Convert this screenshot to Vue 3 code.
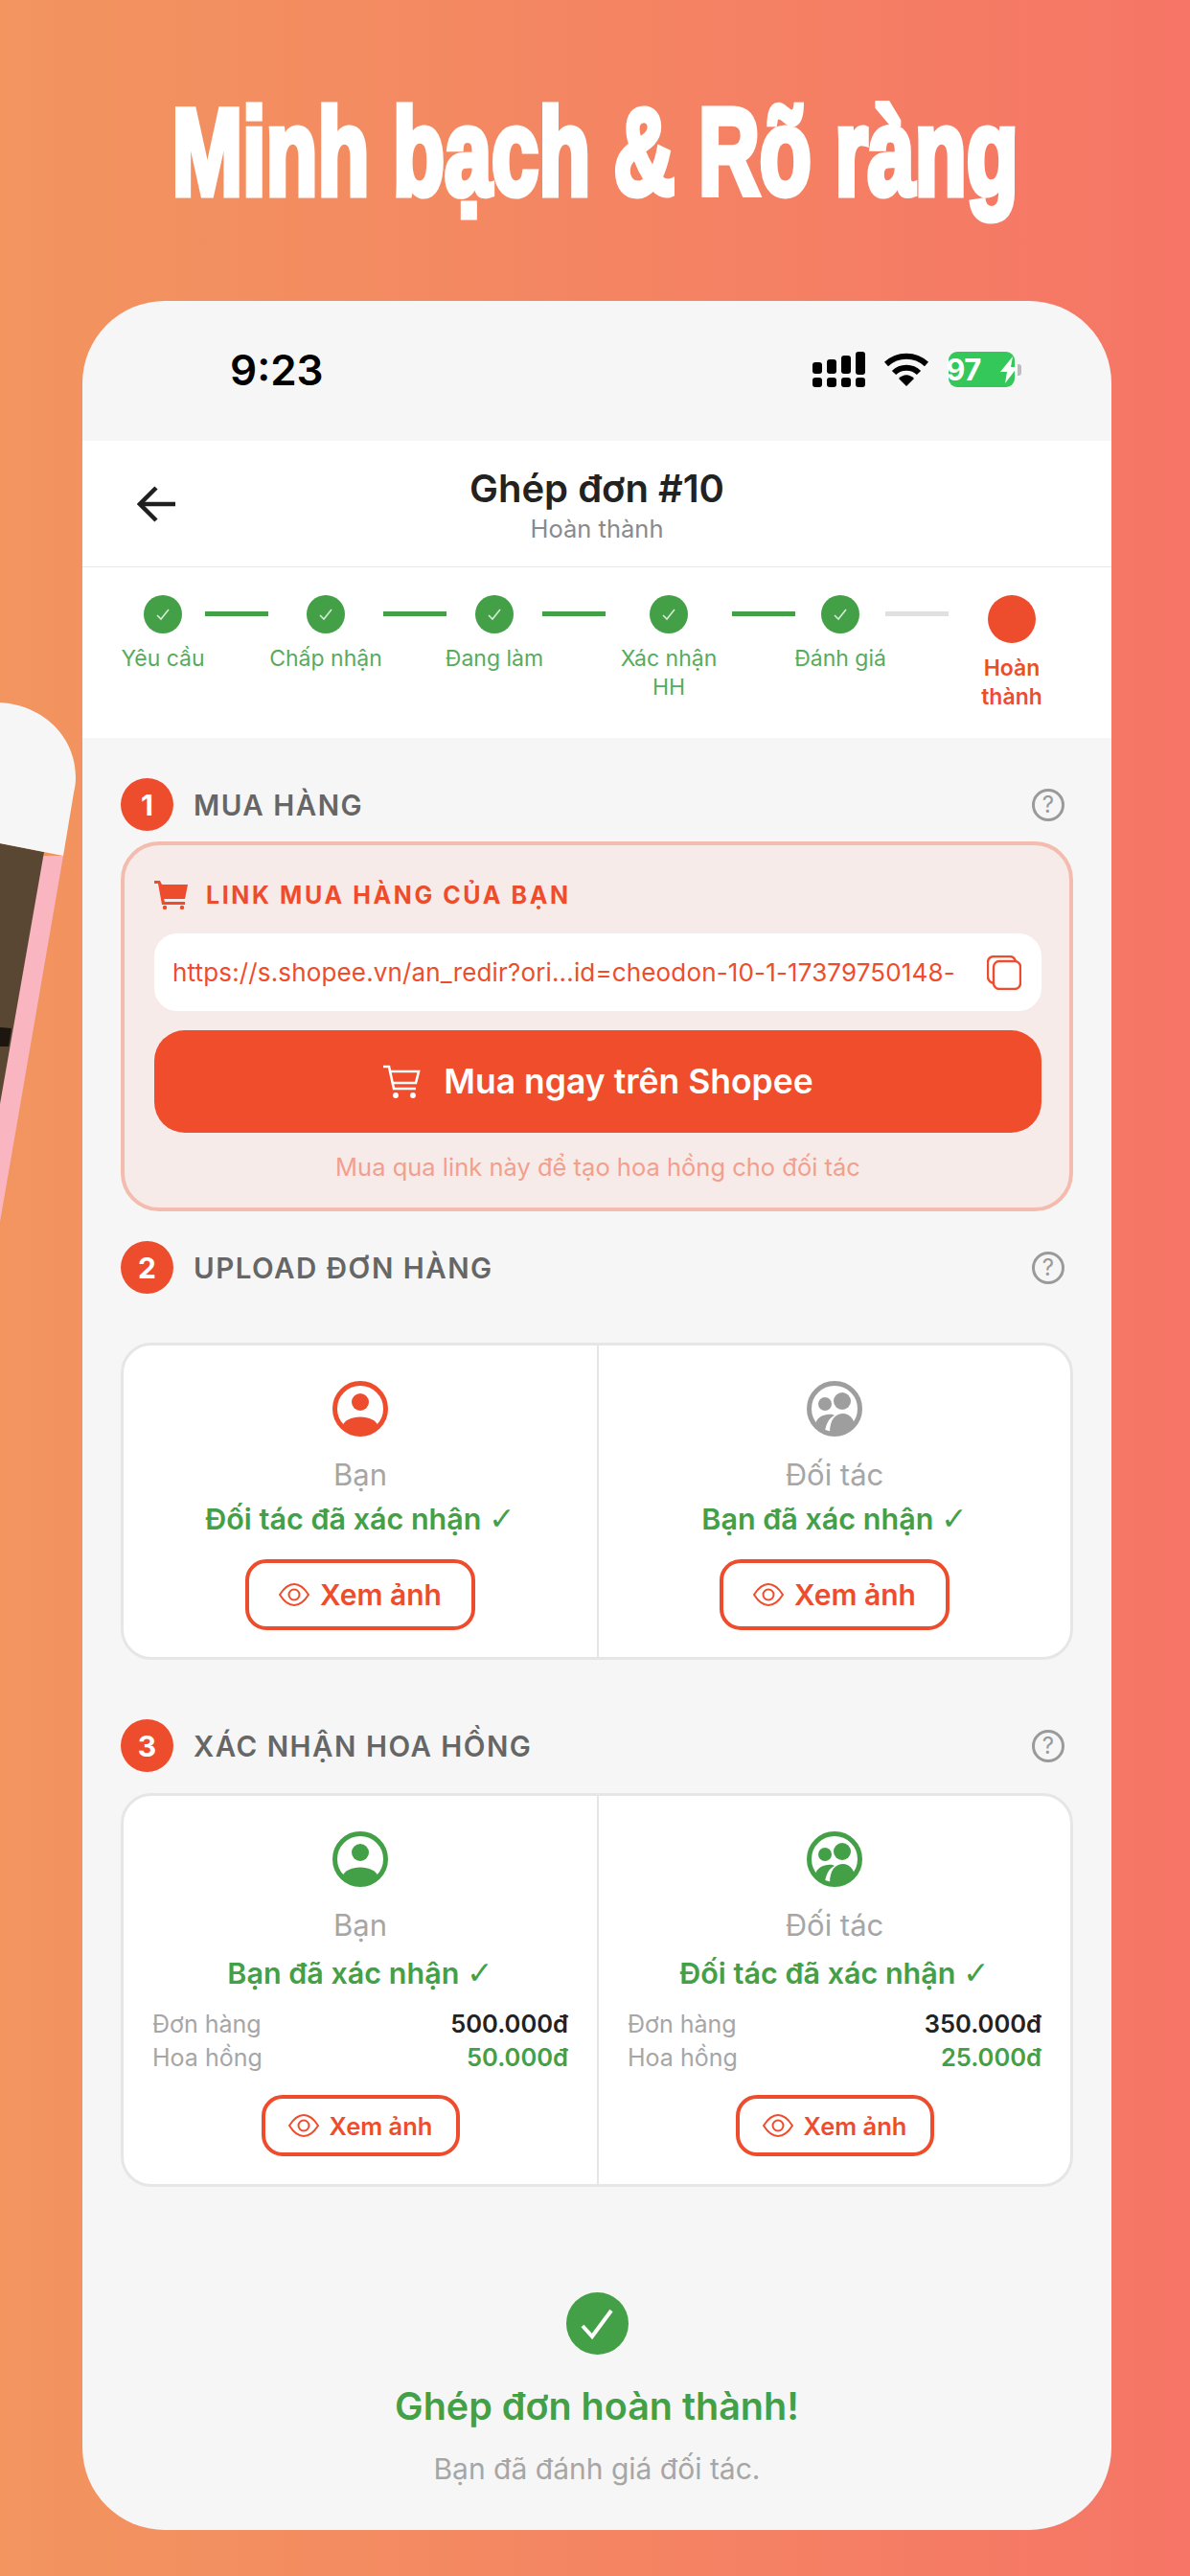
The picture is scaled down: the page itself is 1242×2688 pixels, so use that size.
<template>
  <div class="page">
    <svg class="side-phone" width="86" height="600" viewBox="0 0 86 600">
      <path d="M0 193 L66 193 L0 575 Z" fill="#f9b6c1" />
      <path d="M0 180 L46 189 L0 452 Z" fill="#5a4733" />
      <path d="M0 372 L12 373 L9 392 L0 392 Z" fill="#1c1510" />
      <path d="M0 33 C45 36 79 68 79 112 C79 118 78 122 77 127 L66 193 L0 180 Z" fill="#f6f6f6" />
    </svg>

    <h1 class="headline">Minh bạch &amp; Rõ ràng</h1>

    <div class="phone">
      <div class="status-bar">
        <span class="clock">9:23</span>
        <div class="status-icons">
          <svg width="56" height="37" viewBox="0 0 56 37" fill="#000">
            <rect x="0" y="27" width="10" height="10" rx="3" />
            <rect x="15" y="27" width="10" height="10" rx="3" />
            <rect x="30" y="27" width="10" height="10" rx="3" />
            <rect x="45" y="27" width="10" height="10" rx="3" />
            <rect x="0" y="11" width="10" height="12" rx="3" />
            <rect x="15" y="8" width="10" height="15" rx="3" />
            <rect x="30" y="4" width="10" height="19" rx="3" />
            <rect x="45" y="0" width="10" height="24" rx="3" />
          </svg>
          <svg width="48" height="36" viewBox="0 0 48 36" fill="none" stroke="#000" stroke-width="6">
            <path d="M3 12 C15 1 33 1 45 12" />
            <path d="M11 21 C18 14 30 14 37 21" />
            <path d="M16 27 L24 35 L32 27 C27 22 21 22 16 27 Z" fill="#000" stroke="none" />
          </svg>
          <div class="battery">
            <span>97</span>
            <svg class="bolt" width="18" height="28" viewBox="0 0 18 28" fill="#fff"><path d="M13 0 L0 16 H7 L5 28 L18 11 H11 Z" /></svg>
          </div>
          <i class="battery-nub"></i>
        </div>
      </div>

      <header class="top-bar">
        <svg class="back" width="42" height="38" viewBox="0 0 42 38" fill="none" stroke="#1f1f1f" stroke-width="4.5">
          <path d="M40 19 H4" />
          <path d="M20 2 L3 19 L20 36" />
        </svg>
        <div class="top-title">Ghép đơn #10</div>
        <div class="top-sub">Hoàn thành</div>
      </header>

      <div class="stepper">
        <template v-for="(s, i) in steps" :key="s.label">
          <div class="step" :class="{ current: s.current }" :style="{ width: s.w + 'px' }">
            <span class="step-dot">
              <svg v-if="!s.current" width="18" height="18" viewBox="0 0 18 18" fill="none" stroke="#d5ecd6" stroke-width="1.6">
                <path d="M3 10 L7 14 L15 4" />
              </svg>
            </span>
            <span class="step-label">{{ s.label }}</span>
          </div>
          <i v-if="i < steps.length - 1" class="step-line" :class="{ off: s.last }"></i>
        </template>
      </div>

      <div class="content">
        <div class="sec-head first">
          <span class="sec-num">1</span>
          <span class="sec-title">MUA HÀNG</span>
          <span class="sec-help">?</span>
        </div>
        <div class="buy-card">
          <div class="buy-label">
            <svg width="36" height="30" viewBox="0 0 36 30" fill="#ee4d2d">
              <path d="M0 0 H6 L8 4 H35 L32 19 H10 L11 22 H32 V25 H8 L4 3 H0 Z" />
              <circle cx="11" cy="28" r="2.2" />
              <circle cx="29" cy="28" r="2.2" />
            </svg>
            <span>LINK MUA HÀNG CỦA BẠN</span>
          </div>
          <div class="link-box">
            <span class="link-text">https://s.shopee.vn/an_redir?ori...id=cheodon-10-1-17379750148-</span>
            <svg width="36" height="36" viewBox="0 0 36 36" fill="none" stroke="#ee4d2d" stroke-width="2.4">
              <rect x="7" y="6" width="28" height="29" rx="6" />
              <path d="M7 29 C3 28 1 26 1 22 V7 C1 3 4 1 8 1 H24 C27 1 29 3 30 6" />
            </svg>
          </div>
          <button class="buy-btn">
            <svg width="40" height="36" viewBox="0 0 40 36" fill="none" stroke="#fff" stroke-width="2.6">
              <path d="M1 2 H7 L12 25 H35" />
              <path d="M8 7 H38 L35 19 H10" />
              <circle cx="14" cy="32" r="1.6" fill="#fff" />
              <circle cx="32" cy="32" r="1.6" fill="#fff" />
            </svg>
            Mua ngay trên Shopee
          </button>
          <p class="buy-note">Mua qua link này để tạo hoa hồng cho đối tác</p>
        </div>

        <div class="sec-head second">
          <span class="sec-num">2</span>
          <span class="sec-title">UPLOAD ĐƠN HÀNG</span>
          <span class="sec-help">?</span>
        </div>
        <div class="two-card upload">
          <div v-for="c in uploads" :key="c.who" class="side" :class="c.tone">
            <svg class="avatar" width="58" height="58" viewBox="0 0 58 58">
              <circle cx="29" cy="29" r="26.5" fill="#fff" stroke="currentColor" stroke-width="5" />
              <template v-if="c.who === 'Bạn'">
                <circle cx="29" cy="22" r="9" fill="currentColor" />
                <path d="M10 48 C13 34 45 34 48 48 C38 57 20 57 10 48 Z" fill="currentColor" />
              </template>
              <template v-else>
                <circle cx="19" cy="24" r="7" fill="currentColor" />
                <circle cx="37" cy="21" r="9" fill="currentColor" />
                <path d="M9 47 C9 35 25 33 29 36 C23 39 20 45 19 53 C15 52 11 50 9 47 Z" fill="currentColor" />
                <path d="M24 54 C24 40 30 34 38 34 C44 34 49 39 50 46 C44 53 33 56 24 54 Z" fill="currentColor" />
              </template>
            </svg>
            <div class="who">{{ c.who }}</div>
            <div class="state">{{ c.state }} <span class="tick">✓</span></div>
            <button class="view-btn">
              <svg class="eye" viewBox="0 0 32 24" fill="none" stroke="currentColor" stroke-width="2">
                <path d="M1 12 C6 4 11 1 16 1 C21 1 26 4 31 12 C26 20 21 23 16 23 C11 23 6 20 1 12 Z" />
                <circle cx="16" cy="12" r="5.5" />
              </svg>
              Xem ảnh
            </button>
          </div>
        </div>

        <div class="sec-head third">
          <span class="sec-num">3</span>
          <span class="sec-title">XÁC NHẬN HOA HỒNG</span>
          <span class="sec-help">?</span>
        </div>
        <div class="two-card confirm">
          <div v-for="c in confirms" :key="c.who" class="side green">
            <svg class="avatar" width="58" height="58" viewBox="0 0 58 58">
              <circle cx="29" cy="29" r="26.5" fill="#fff" stroke="currentColor" stroke-width="5" />
              <template v-if="c.who === 'Bạn'">
                <circle cx="29" cy="22" r="9" fill="currentColor" />
                <path d="M10 48 C13 34 45 34 48 48 C38 57 20 57 10 48 Z" fill="currentColor" />
              </template>
              <template v-else>
                <circle cx="19" cy="24" r="7" fill="currentColor" />
                <circle cx="37" cy="21" r="9" fill="currentColor" />
                <path d="M9 47 C9 35 25 33 29 36 C23 39 20 45 19 53 C15 52 11 50 9 47 Z" fill="currentColor" />
                <path d="M24 54 C24 40 30 34 38 34 C44 34 49 39 50 46 C44 53 33 56 24 54 Z" fill="currentColor" />
              </template>
            </svg>
            <div class="who">{{ c.who }}</div>
            <div class="state">{{ c.state }} <span class="tick">✓</span></div>
            <div class="money">
              <span>Đơn hàng</span><b>{{ c.order }}</b>
              <span>Hoa hồng</span><b class="fee">{{ c.fee }}</b>
            </div>
            <button class="view-btn small">
              <svg class="eye" viewBox="0 0 32 24" fill="none" stroke="currentColor" stroke-width="2">
                <path d="M1 12 C6 4 11 1 16 1 C21 1 26 4 31 12 C26 20 21 23 16 23 C11 23 6 20 1 12 Z" />
                <circle cx="16" cy="12" r="5.5" />
              </svg>
              Xem ảnh
            </button>
          </div>
        </div>

        <div class="done">
          <span class="done-icon">
            <svg width="36" height="34" viewBox="0 0 36 34" fill="none" stroke="#fff" stroke-width="4">
              <path d="M3 19 L13 30 L33 3" />
            </svg>
          </span>
          <div class="done-title">Ghép đơn hoàn thành!</div>
          <div class="done-sub">Bạn đã đánh giá đối tác.</div>
        </div>
      </div>
    </div>
  </div>
</template>

<script setup>
const steps = [
  { label: "Yêu cầu", w: 88 },
  { label: "Chấp nhận", w: 120 },
  { label: "Đang làm", w: 100 },
  { label: "Xác nhận\nHH", w: 132 },
  { label: "Đánh giá", w: 94, last: true },
  { label: "Hoàn\nthành", w: 132, current: true },
];

const uploads = [
  { who: "Bạn", state: "Đối tác đã xác nhận", tone: "orange" },
  { who: "Đối tác", state: "Bạn đã xác nhận", tone: "grey" },
];

const confirms = [
  { who: "Bạn", state: "Bạn đã xác nhận", order: "500.000đ", fee: "50.000đ" },
  { who: "Đối tác", state: "Đối tác đã xác nhận", order: "350.000đ", fee: "25.000đ" },
];
</script>

<style>
html,
body {
  margin: 0;
  padding: 0;
}
</style>

<style scoped>
.page {
  position: relative;
  width: 1242px;
  height: 2688px;
  overflow: hidden;
  box-sizing: border-box;
  padding-top: 96px;
  background: linear-gradient(90deg, #f2955f, #f67566);
  font-family: Inter, "Noto Sans", sans-serif;
}

.side-phone {
  position: absolute;
  left: 0;
  top: 700px;
}

.headline {
  margin: 0;
  height: 126px;
  line-height: 126px;
  display: flex;
  justify-content: center;
  white-space: nowrap;
  font-family: "Liberation Sans", sans-serif;
  font-size: 128px;
  font-weight: 700;
  color: #fff;
  -webkit-text-stroke: 7px #fff;
  transform: scaleX(0.69);
}

.phone {
  box-sizing: border-box;
  width: 1074px;
  height: 2326px;
  margin: 92px 0 0 86px;
  border-radius: 86px;
  background: #f6f6f6;
  overflow: hidden;
}

.status-bar {
  height: 146px;
  box-sizing: border-box;
  padding: 50px 94px 0 154px;
  display: flex;
  justify-content: space-between;
  align-items: flex-start;
}

.clock {
  font-size: 44px;
  line-height: 44px;
  font-weight: 600;
  color: #000;
}

.status-icons {
  display: flex;
  align-items: center;
  height: 37px;
  margin-top: 3px;
}

.status-icons svg:nth-child(2) {
  margin-left: 18px;
}

.battery {
  flex: none;
  width: 69px;
  height: 37px;
  margin-left: 20px;
  border-radius: 9px;
  background: #34c759;
  display: flex;
  align-items: center;
  justify-content: center;
  gap: 2px;
  color: #fff;
  font-size: 31px;
  font-weight: 700;
  letter-spacing: -0.5px;
}

.bolt {
  flex: none;
}

.battery-nub {
  width: 4px;
  height: 12px;
  margin-left: 3px;
  border-radius: 0 3px 3px 0;
  background: #bdbdbd;
}

.top-bar {
  position: relative;
  box-sizing: border-box;
  height: 132px;
  padding-top: 26px;
  background: #fff;
  border-bottom: 1px solid #e8e8e8;
  text-align: center;
}

.back {
  position: absolute;
  left: 57px;
  top: 47px;
}

.top-title {
  font-size: 40px;
  line-height: 48px;
  font-weight: 600;
  color: #222;
}

.top-sub {
  margin-top: 3px;
  font-size: 25.5px;
  line-height: 30px;
  color: #8a8a8a;
}

.stepper {
  box-sizing: border-box;
  height: 178px;
  padding: 29px 0 0 40px;
  background: #fff;
  display: flex;
  align-items: flex-start;
}

.step {
  flex: none;
  display: flex;
  flex-direction: column;
  align-items: center;
  text-align: center;
  color: #57ab5e;
  font-size: 23px;
  line-height: 30px;
}

.step-dot {
  width: 40px;
  height: 40px;
  border-radius: 50%;
  background: #43a047;
  display: flex;
  align-items: center;
  justify-content: center;
}

.step-label {
  margin-top: 11px;
  white-space: pre;
}

.step.current {
  color: #ee4d2d;
  font-weight: 600;
}

.step.current .step-dot {
  width: 50px;
  height: 50px;
  background: #ee4d2d;
}

.step-line {
  flex: none;
  width: 66px;
  height: 5px;
  margin-top: 17px;
  background: #43a047;
}

.step-line.off {
  background: #e0e0e0;
}

.content {
  padding: 0 40px;
}

.sec-head {
  display: flex;
  align-items: center;
  height: 55px;
  padding-right: 9px;
}

.sec-head.first {
  margin-top: 42px;
  margin-bottom: 11px;
}

.sec-head.second {
  margin-top: 31px;
  margin-bottom: 51px;
}

.sec-head.third {
  margin-top: 62px;
  margin-bottom: 22px;
}

.sec-num {
  width: 55px;
  height: 55px;
  border-radius: 50%;
  background: #ee4d2d;
  color: #fff;
  font-size: 30px;
  font-weight: 700;
  display: flex;
  align-items: center;
  justify-content: center;
}

.sec-title {
  flex: 1;
  margin-left: 21px;
  font-size: 29.5px;
  font-weight: 600;
  letter-spacing: 1.5px;
  color: #666;
}

.sec-help {
  box-sizing: border-box;
  width: 34px;
  height: 34px;
  border: 3px solid #9a9a9a;
  border-radius: 50%;
  color: #9a9a9a;
  font-size: 24px;
  line-height: 28px;
  text-align: center;
}

.buy-card {
  box-sizing: border-box;
  height: 386px;
  padding: 36px 29px 0 31px;
  border: 4px solid #f4bcae;
  border-radius: 40px;
  background: #f6ebe9;
}

.buy-label {
  display: flex;
  align-items: center;
  gap: 18px;
  height: 32px;
  color: #ee4d2d;
  font-size: 25px;
  font-weight: 700;
  letter-spacing: 2.6px;
}

.link-box {
  height: 81px;
  margin-top: 24px;
  padding: 0 21px 0 19px;
  box-sizing: border-box;
  background: #fff;
  border-radius: 24px;
  display: flex;
  align-items: center;
  justify-content: space-between;
}

.link-text {
  font-size: 26px;
  letter-spacing: 0.15px;
  color: #ee4d2d;
  white-space: nowrap;
}

.buy-btn {
  width: 100%;
  height: 107px;
  margin-top: 20px;
  border: none;
  border-radius: 32px;
  background: #ef4d2b;
  color: #fff;
  font-family: inherit;
  font-size: 35.5px;
  font-weight: 600;
  display: flex;
  align-items: center;
  justify-content: center;
  gap: 24px;
}

.buy-note {
  margin: 21px 0 0;
  text-align: center;
  font-size: 25.5px;
  line-height: 30px;
  color: #f39f8e;
}

.two-card {
  box-sizing: border-box;
  display: grid;
  grid-template-columns: 1fr 1fr;
  border: 3px solid #e6e6e6;
  border-radius: 32px;
  background: #fff;
}

.two-card.upload {
  height: 331px;
}

.two-card.confirm {
  height: 411px;
}

.side {
  display: flex;
  flex-direction: column;
  align-items: center;
  padding: 37px 30px 0;
}

.side + .side {
  border-left: 2px solid #e6e6e6;
}

.side.orange {
  color: #ee4d2d;
}

.side.grey {
  color: #9e9e9e;
}

.side.green {
  color: #43a047;
}

.who {
  margin-top: 22px;
  font-size: 31px;
  line-height: 36px;
  color: #a6a6a6;
}

.state {
  margin-top: 10px;
  font-size: 30.5px;
  line-height: 36px;
  font-weight: 600;
  color: #43a047;
  white-space: nowrap;
}

.tick {
  font-family: "DejaVu Sans", sans-serif;
  font-size: 33px;
  font-weight: 400;
}

.confirm .state {
  margin-top: 14px;
}

.view-btn {
  box-sizing: border-box;
  width: 240px;
  height: 74px;
  margin-top: 24px;
  border: 4px solid #ee4d2d;
  border-radius: 22px;
  background: #fff;
  color: #ee4d2d;
  font-family: inherit;
  font-size: 30px;
  font-weight: 600;
  display: flex;
  align-items: center;
  justify-content: center;
  gap: 11px;
}

.view-btn.small {
  width: 207px;
  height: 64px;
  margin-top: 24px;
  font-size: 25.5px;
}

.eye {
  width: 32px;
  height: 24px;
}

.money {
  align-self: stretch;
  margin-top: 20px;
  display: grid;
  grid-template-columns: 1fr auto;
  row-gap: 5px;
  font-size: 25px;
  line-height: 30px;
  color: #a6a6a6;
}

.money b {
  font-size: 25.5px;
  font-weight: 600;
  text-align: right;
  color: #222;
}

.money b.fee {
  color: #43a047;
}

.done {
  margin-top: 110px;
  display: flex;
  flex-direction: column;
  align-items: center;
}

.done-icon {
  width: 65px;
  height: 65px;
  border-radius: 50%;
  background: #43a047;
  display: flex;
  align-items: center;
  justify-content: center;
}

.done-title {
  margin-top: 29px;
  font-size: 39.5px;
  line-height: 50px;
  font-weight: 600;
  color: #43a047;
}

.done-sub {
  margin-top: 22px;
  font-size: 30px;
  line-height: 36px;
  color: #a6a6a6;
}
</style>
